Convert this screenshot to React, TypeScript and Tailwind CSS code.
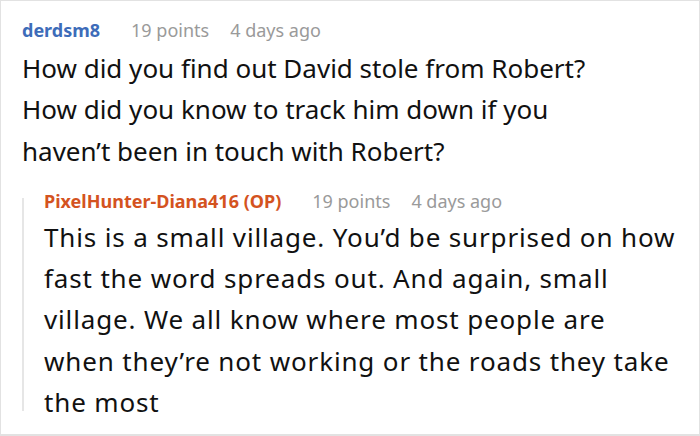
import React from 'react';

const comment = {
  author: 'derdsm8',
  points: '19 points',
  age: '4 days ago',
  lines: [
    'How did you find out David stole from Robert?',
    'How did you know to track him down if you',
    'haven’t been in touch with Robert?',
  ],
};

const reply = {
  author: 'PixelHunter-Diana416 (OP)',
  points: '19 points',
  age: '4 days ago',
  lines: [
    'This is a small village. You’d be surprised on how',
    'fast the word spreads out. And again, small',
    'village. We all know where most people are',
    'when they’re not working or the roads they take',
    'the most',
  ],
};

function Meta({ author, points, age, authorClass }: { author: string; points: string; age: string; authorClass: string }) {
  return (
    <div className="flex items-center h-[26px] text-[18px] leading-[26px]">
      <span className={`font-bold ${authorClass}`}>{author}</span>
      <span className="ml-[31px] text-[#9a9a9a]">{points}</span>
      <span className="ml-[21px] text-[#9a9a9a]">{age}</span>
    </div>
  );
}

export default function App() {
  return (
    <div className="w-[700px] h-[436px] bg-white border border-[#e2e2e2] border-b-2 overflow-hidden font-['Noto_Sans',sans-serif]">
      <div className="pl-[21px] pt-[16px]">
        <Meta {...comment} authorClass="text-[#3d6cb9]" />
        <div className="mt-[5px] text-[26px] leading-[41.3px] text-[#111]">
          {comment.lines.map((l) => (
            <div key={l}>{l}</div>
          ))}
        </div>

        {/* nested reply with thread line */}
        <div className="mt-[16px] flex">
          <div className="w-[2px] shrink-0 bg-[#e6e6e6] mt-[10px] mb-[12px]" />
          <div className="pl-[20px]">
            <Meta {...reply} authorClass="text-[#d4531f]" />
            <div className="mt-[3px] text-[26px] leading-[41.3px] tracking-[0.85px] text-[#111]">
              {reply.lines.map((l) => (
                <div key={l}>{l}</div>
              ))}
            </div>
          </div>
        </div>
      </div>
    </div>
  );
}
